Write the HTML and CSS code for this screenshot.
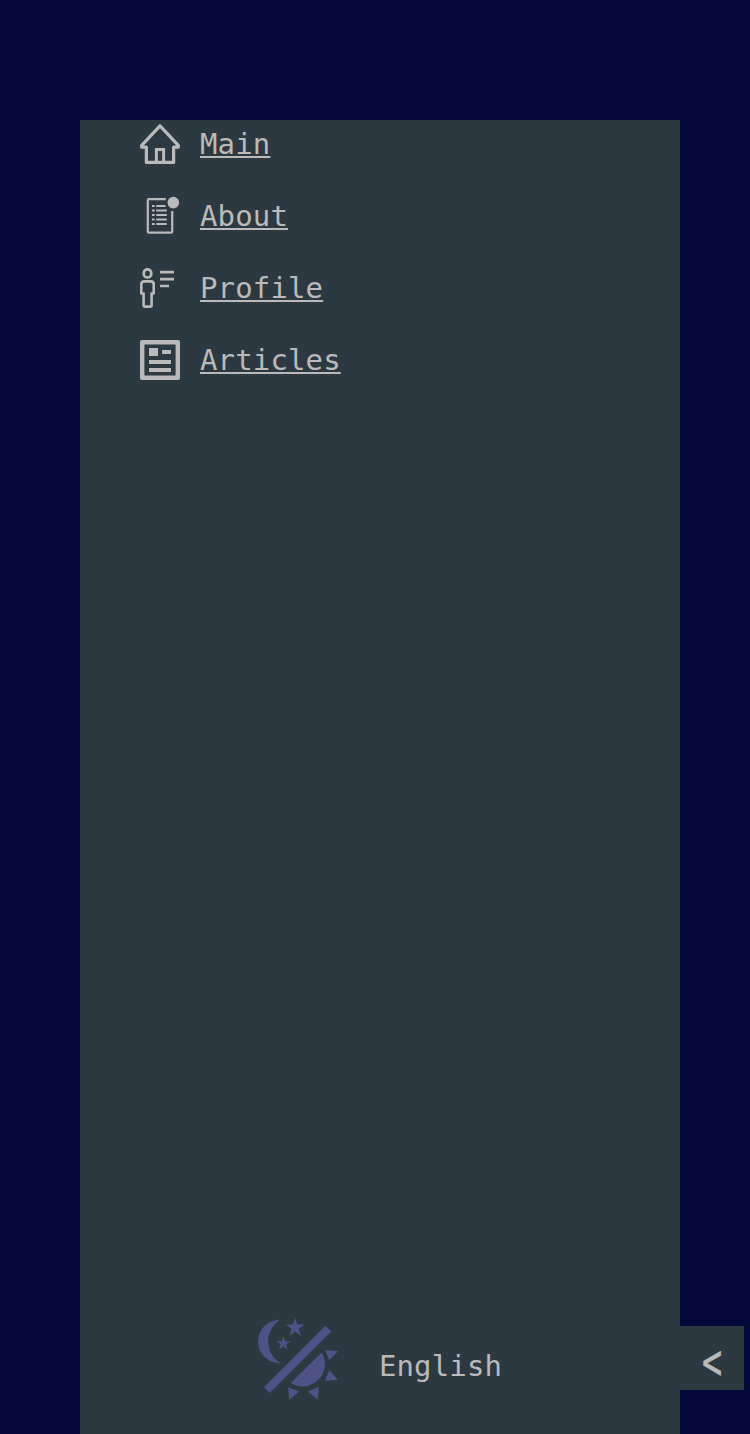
FILE: index.html
```html
<!DOCTYPE html>
<html lang="en">
<head>
<meta charset="utf-8">
<title>Menu</title>
<link rel="stylesheet" href="styles.css">
</head>
<body>
<aside class="sidebar">
  <nav class="menu">
    <a class="item" href="#">
      <svg class="icon" viewBox="0 0 40 40" fill="none" stroke="currentColor" stroke-width="3.2" stroke-linejoin="round" stroke-linecap="round"><path d="M6.4 23.2H1.7V21.3L20 1.8 38.3 21.3V23.2H33.6V38.4H6.4Z"/><path d="M16.4 38V25.6H23.6V38" stroke-width="3" stroke-linejoin="miter"/></svg>
      <span class="label">Main</span>
    </a>
    <a class="item" href="#">
      <svg class="icon" viewBox="0 0 40 40" fill="none" stroke="currentColor" stroke-width="2.2" stroke-linejoin="round"><path d="M25.8 3.1H9Q7.8 3.1 7.8 4.3V35.4Q7.8 36.6 9 36.6H31Q32.2 36.6 32.2 35.4V14.9"/><path d="M12 10h2.7M16.2 10H25.6M12 14.5h2.7M16.2 14.5H26.8M12 19h2.7M16.2 19H26.8M12 23.5h2.7M16.2 23.5H26.8M12 28h2.7M16.2 28H26.8" stroke-width="2.1"/><circle cx="33.3" cy="6.6" r="5.8" fill="currentColor" stroke="none"/></svg>
      <span class="label">About</span>
    </a>
    <a class="item" href="#">
      <svg class="icon" viewBox="0 0 40 40" fill="none" stroke="currentColor" stroke-width="2.7" stroke-linejoin="round"><ellipse cx="7.5" cy="5.4" rx="3.8" ry="4.1"/><path d="M4.2 13.4H10.8Q13.7 13.4 13.7 16.3V25.5H11.6V37.2Q11.6 38.6 10.1 38.6H5Q3.6 38.6 3.6 37.2V25.5H1.3V16.3Q1.3 13.4 4.2 13.4Z" stroke-width="2.6"/><path d="M20 4.2H34M20 11.1H34M20 18H29"/></svg>
      <span class="label">Profile</span>
    </a>
    <a class="item" href="#">
      <svg class="icon" viewBox="0 0 40 40" fill="currentColor"><path fill-rule="evenodd" d="M2 0H38Q40 0 40 2V38Q40 40 38 40H2Q0 40 0 38V2Q0 0 2 0ZM4.4 4.4V35.6H35.6V4.4Z"/><path d="M9 8h9v8H9zM22 10h9v4H22zM9 20h22v4H9zM9 28h22v4H9z"/></svg>
      <span class="label">Articles</span>
    </a>
  </nav>
  <footer class="switchers">
    <button class="theme" aria-label="Theme">
      <svg class="theme-icon" viewBox="0 0 84 84" fill="currentColor"><path d="M24 1.8A21.8 21.8 0 0 0 2 23.5A21.8 21.8 0 0 0 24.5 45.2A25.5 25.5 0 0 1 24 1.8Z"/><path d="M39.2 0l2.2 6.6h7l-5.6 4.2 2.1 6.9-5.7-4.1-5.7 4.1 2.1-6.9-5.6-4.2h7ZM27.4 18.2l1.6 5.1h5.3L30 26.5l1.6 5-4.2-3.1-4.3 3.1 1.6-5-4.2-3.2h5.3Z"/><path d="M69.3 7.8 75.2 13.6 13.8 75 7.9 69.2Z"/><path d="M65.4 34.7C70.5 41 70.3 52.5 63.5 60.5C56 69 43.5 71 34.9 64.7Z"/><path d="M69.3 32.3 82.2 33 73.3 42.3ZM73.3 52 81.8 62 69 62.8ZM52 73.5 62.7 69 61.9 81.8ZM32.1 69 43 73.5 33.3 81.9Z"/></svg>
    </button>
    <button class="lang">English</button>
  </footer>
  <button class="toggle" aria-label="Collapse"><span class="arrow">&lt;</span></button>
</aside>
</body>
</html>
```
FILE: styles.css
```css
* { box-sizing: border-box; }
body {
  margin: 0;
  min-height: 1434px;
  padding: 120px 70px 0 80px;
  background: #040838;
  color: #bababa;
  font: 29px/48px "DejaVu Sans Mono", monospace;
  letter-spacing: 0.14px;
}
button {
  margin: 0;
  padding: 0;
  border: 0;
  background: none;
  color: inherit;
  font: inherit;
  letter-spacing: inherit;
}
.sidebar {
  position: relative;
  display: flex;
  flex-direction: column;
  justify-content: space-between;
  height: 1314px;
  background: #2d3940;
}
.menu {
  display: flex;
  flex-direction: column;
  gap: 24px;
  padding-left: 60px;
}
.item {
  display: flex;
  align-items: center;
  gap: 20px;
  height: 48px;
  color: inherit;
  text-decoration: none;
}
.icon { width: 40px; height: 40px; }
.label {
  padding-bottom: 1px;
  text-decoration: underline;
  text-decoration-thickness: 2px;
  text-underline-offset: 2px;
  text-decoration-skip-ink: none;
}
.switchers {
  display: flex;
  justify-content: center;
  align-items: center;
  gap: 39px;
  padding: 0 2px 32px 0;
}
.theme, .theme-icon {
  display: block;
  width: 84px;
  height: 84px;
}
.theme { color: #4f5287; }
.lang { padding-top: 11px; }
.toggle {
  position: absolute;
  right: -64px;
  bottom: 44px;
  width: 64px;
  height: 64px;
  background: #2d3940;
}
.arrow {
  display: block;
  padding-top: 6px;
  font-size: 36px;
  line-height: 58px;
  letter-spacing: 0;
  -webkit-text-stroke: 0.4px currentColor;
  transform: scale(0.93, 1.4);
}
```
